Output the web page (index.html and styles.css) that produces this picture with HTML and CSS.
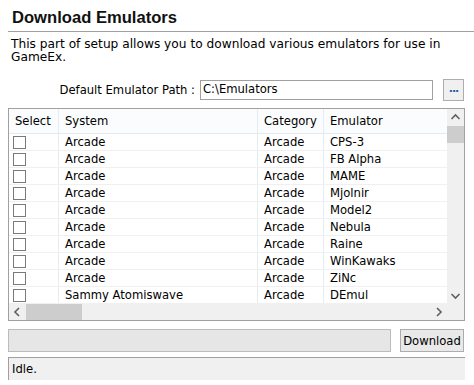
FILE: index.html
```html
<!DOCTYPE html>
<html lang="en">
<head>
  <meta charset="UTF-8">
  <title>Download Emulators</title>
  <link rel="stylesheet" href="styles.css">
</head>
<body>
  <div class="page">
    <h1 class="title">Download Emulators</h1>
    <p class="intro">This part of setup allows you to download various emulators for use in GameEx.</p>

    <div class="path-row">
      <label class="path-label">Default Emulator Path :</label>
      <div class="path-input">C:\Emulators</div>
      <button class="browse-button">...</button>
    </div>

    <div class="grid-box">
      <div class="grid-main">
        <div class="grid-view">
          <div class="grid-row grid-head">
            <div class="cell">Select</div>
            <div class="cell">System</div>
            <div class="cell">Category</div>
            <div class="cell">Emulator</div>
          </div>
          <div class="grid-row"><div class="cell"><span class="check"></span></div><div class="cell">Arcade</div><div class="cell">Arcade</div><div class="cell">CPS-3</div></div>
          <div class="grid-row"><div class="cell"><span class="check"></span></div><div class="cell">Arcade</div><div class="cell">Arcade</div><div class="cell">FB Alpha</div></div>
          <div class="grid-row"><div class="cell"><span class="check"></span></div><div class="cell">Arcade</div><div class="cell">Arcade</div><div class="cell">MAME</div></div>
          <div class="grid-row"><div class="cell"><span class="check"></span></div><div class="cell">Arcade</div><div class="cell">Arcade</div><div class="cell">Mjolnir</div></div>
          <div class="grid-row"><div class="cell"><span class="check"></span></div><div class="cell">Arcade</div><div class="cell">Arcade</div><div class="cell">Model2</div></div>
          <div class="grid-row"><div class="cell"><span class="check"></span></div><div class="cell">Arcade</div><div class="cell">Arcade</div><div class="cell">Nebula</div></div>
          <div class="grid-row"><div class="cell"><span class="check"></span></div><div class="cell">Arcade</div><div class="cell">Arcade</div><div class="cell">Raine</div></div>
          <div class="grid-row"><div class="cell"><span class="check"></span></div><div class="cell">Arcade</div><div class="cell">Arcade</div><div class="cell">WinKawaks</div></div>
          <div class="grid-row"><div class="cell"><span class="check"></span></div><div class="cell">Arcade</div><div class="cell">Arcade</div><div class="cell">ZiNc</div></div>
          <div class="grid-row"><div class="cell"><span class="check"></span></div><div class="cell">Sammy Atomiswave</div><div class="cell">Arcade</div><div class="cell">DEmul</div></div>
        </div>
        <div class="vscroll">
          <svg class="arrow" width="17" height="17" viewBox="0 0 17 17"><path d="M4.5 10 L8.5 6 L12.5 10" fill="none" stroke="#606060" stroke-width="1.6"/></svg>
          <div class="vthumb"></div>
          <div class="vtrack"></div>
          <svg class="arrow" width="17" height="17" viewBox="0 0 17 17"><path d="M4.5 7 L8.5 11 L12.5 7" fill="none" stroke="#606060" stroke-width="1.6"/></svg>
        </div>
      </div>
      <div class="hscroll">
        <svg class="arrow" width="17" height="16" viewBox="0 0 17 16"><path d="M10 4 L6 8 L10 12" fill="none" stroke="#606060" stroke-width="1.6"/></svg>
        <div class="hthumb"></div>
        <div class="htrack"></div>
        <svg class="arrow" width="17" height="16" viewBox="0 0 17 16"><path d="M7 4 L11 8 L7 12" fill="none" stroke="#606060" stroke-width="1.6"/></svg>
        <div class="corner"></div>
      </div>
    </div>

    <div class="action-row">
      <div class="progress"></div>
      <button class="download-button">Download</button>
    </div>

    <div class="status">Idle.</div>
  </div>
</body>
</html>
```

FILE: styles.css
```css
body {
  margin: 0;
  background-color: #fff;
  font-family: "DejaVu Sans", Verdana, sans-serif;
  font-size: 11.6px;
  color: #000;
}

.page {
  padding-left: 8px;
  width: 457px;
}

.title {
  margin: 0;
  padding: 8px 0 0 4px;
  height: 23px;
  font-family: "Liberation Sans", Arial, sans-serif;
  font-size: 16.6px;
  font-weight: bold;
  line-height: 20px;
  color: #111;
  border-bottom: 1px solid #a0a0a0;
  width: 462px;
}

.intro {
  margin: 0;
  padding: 6px 20px 0 3px;
  font-size: 12.2px;
  line-height: 13px;
  height: 41px;
}

.path-row {
  display: flex;
  align-items: center;
  height: 22px;
}

.path-label {
  flex: 1;
  text-align: right;
  padding-right: 5px;
}

.path-input {
  width: 229px;
  height: 18px;
  line-height: 17px;
  padding-left: 2px;
  border: 1px solid #a0a0a0;
  background-color: #fff;
}

.browse-button {
  margin: 0 1px 0 10px;
  width: 21px;
  height: 22px;
  padding: 0 0 4px;
  border: 1px solid #adadad;
  background-color: #f0f0f0;
  color: #1a5fa8;
  font-family: "DejaVu Sans", sans-serif;
  font-size: 11px;
  font-weight: bold;
  letter-spacing: -1px;
}

.grid-box {
  margin-top: 7px;
  width: 455px;
  border: 1px solid #a0a0a0;
}

.grid-main {
  display: flex;
}

.grid-view {
  width: 438px;
  height: 195px;
  overflow: hidden;
}

.grid-row {
  display: grid;
  grid-template-columns: 50px 199px 66px 123px;
  height: 17px;
  border-bottom: 1px solid #f0f0f0;
  box-sizing: border-box;
}

.grid-head {
  height: 25px;
  background-color: #fbfcfd;
  border-bottom: 1px solid #e3e9f1;
}

.cell {
  display: flex;
  align-items: center;
  padding-left: 6px;
  border-right: 1px solid #e6ecf3;
  white-space: nowrap;
  overflow: hidden;
}

.grid-row .cell:last-child {
  border-right: none;
}

.grid-row .cell:first-child {
  padding-left: 4px;
}

.grid-head .cell:first-child {
  padding-left: 6px;
}

.check {
  width: 11px;
  height: 11px;
  border: 1px solid #7a7a7a;
  background-color: #fff;
}

.vscroll {
  width: 17px;
  display: flex;
  flex-direction: column;
  background-color: #f0f0f0;
}

.arrow {
  display: block;
  flex-shrink: 0;
}

.vthumb {
  height: 17px;
  background-color: #cdcdcd;
}

.vtrack {
  flex: 1;
}

.hscroll {
  display: flex;
  height: 16px;
  background-color: #f0f0f0;
}

.hthumb {
  width: 56px;
  background-color: #cdcdcd;
}

.htrack {
  flex: 1;
}

.corner {
  width: 17px;
  background-color: #f0f0f0;
}

.action-row {
  display: flex;
  margin-top: 8px;
  height: 23px;
}

.progress {
  width: 381px;
  height: 21px;
  border: 1px solid #bcbcbc;
  background-color: #e6e6e6;
}

.download-button {
  margin-left: 9px;
  width: 64px;
  height: 23px;
  padding: 0;
  border: 1px solid #adadad;
  background-color: #e9e9e9;
  font-family: "DejaVu Sans", sans-serif;
  font-size: 11.6px;
  color: #000;
}

.status {
  margin-top: 5px;
  height: 23px;
  padding: 4px 0 0 3px;
  box-sizing: border-box;
  border-top: 1px solid #a0a0a0;
  border-left: 1px solid #a0a0a0;
  background-color: #f0f0f0;
}
```
